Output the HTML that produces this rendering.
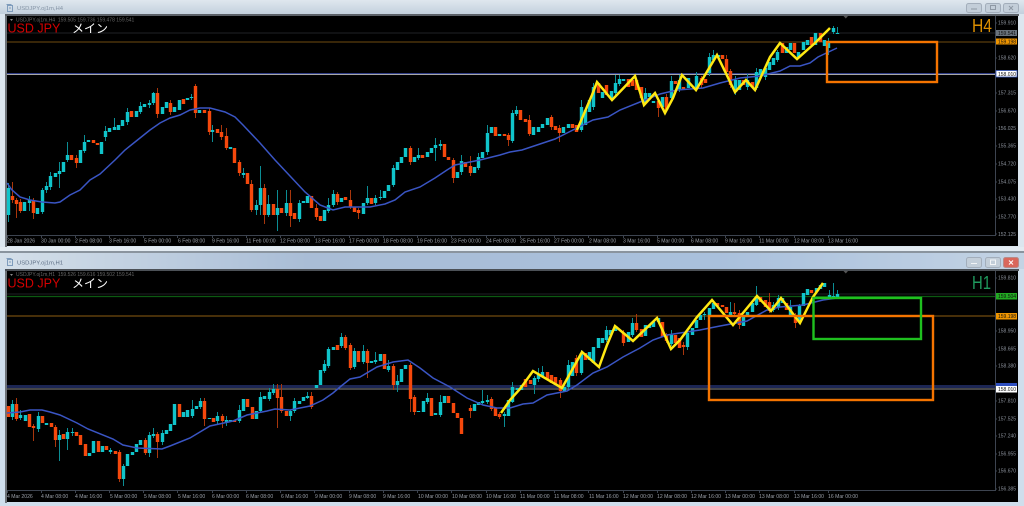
<!DOCTYPE html>
<html><head><meta charset="utf-8"><title>USDJPY</title>
<style>
html,body{margin:0;padding:0;background:#dce6ef;width:1024px;height:506px;overflow:hidden}
svg{display:block;filter:blur(.3px)}
text{font-family:"Liberation Sans","Noto Sans CJK JP",sans-serif}
.t{font-size:5.1px;fill:#9a9fa8}
.p{font-size:5px;fill:#8a909a}
.k{font-size:5px;fill:#111}
.tu{fill:none;stroke:#10c4ca;stroke-width:3.4}
.tw{fill:none;stroke:#0b8d94;stroke-width:1}
.ou{fill:none;stroke:#f5480c;stroke-width:3.4}
.ow{fill:none;stroke:#a8360c;stroke-width:1}
.ma{fill:none;stroke:#3a55c4;stroke-width:1.5}
.ye{fill:none;stroke:#ffe812;stroke-width:2.5;stroke-linejoin:miter}
.ax{stroke:#3d4450;stroke-width:1;fill:none}
</style></head><body>
<svg width="1024" height="506" viewBox="0 0 1024 506" xmlns="http://www.w3.org/2000/svg">
<defs>
<linearGradient id="a" x1="0" y1="0" x2="0" y2="1"><stop offset="0" stop-color="#dfe7ee"/><stop offset="1" stop-color="#c3d0dd"/></linearGradient>
<linearGradient id="b" x1="0" y1="0" x2="1" y2="0"><stop offset="0" stop-color="#d4dfe9"/><stop offset=".3" stop-color="#a9bdd6"/><stop offset=".7" stop-color="#a9c0dc"/><stop offset="1" stop-color="#c3d3e4"/></linearGradient>
</defs>
<rect width="1024" height="506" fill="#dce6ef"/>
<rect x="0" y="0" width="1024" height="14" fill="url(#a)"/>
<rect x="5" y="14" width="1014" height="2" fill="#5b6067"/>
<rect x="5" y="16" width="2" height="231" fill="#6d7278"/>
<rect x="7" y="16" width="1011" height="230" fill="#000"/>
<rect x="0" y="247" width="1024" height="4" fill="#e3ebf2"/>
<rect x="0" y="251" width="1024" height="2" fill="#8a949e"/>
<rect x="0" y="253" width="1024" height="16" fill="url(#b)"/>
<rect x="0" y="269" width="1024" height="237" fill="#cfdeec"/>
<rect x="5" y="269" width="1014" height="2" fill="#4c5157"/>
<rect x="5" y="271" width="2" height="232" fill="#6d7278"/>
<rect x="7" y="271" width="1011" height="231" fill="#000"/>

<!-- window icons -->
<g fill="none" stroke="#7f9cbc" stroke-width="1"><rect x="7.5" y="5.5" width="5" height="6"/><path d="M6.5 4.5h5M9 8h2"/><rect x="7.5" y="259.5" width="5" height="6"/><path d="M6.5 258.5h5M9 262h2"/></g>
<text x="17" y="10" font-size="5.9" fill="#8695a6">USDJPY.oj1m,H4</text>
<text x="17" y="264.5" font-size="5.9" fill="#5e6f86">USDJPY.oj1m,H1</text>

<!-- window buttons -->
<g fill="#c3ced9" stroke="#a3aebb" stroke-width="1">
<rect x="966.5" y="3.5" width="15" height="9" rx="2"/><rect x="985.5" y="3.5" width="15" height="9" rx="2"/><rect x="1003.5" y="3.5" width="15" height="9" rx="2"/>
<rect x="966.5" y="257.5" width="15" height="10" rx="2"/><rect x="985.5" y="257.5" width="15" height="10" rx="2"/>
<rect x="1003.5" y="257.5" width="15" height="10" rx="2" fill="#d9675c" stroke="#b88a88"/>
</g>
<g fill="none" stroke="#8e98a4" stroke-width="1">
<path d="M971 9h6"/><rect x="990.5" y="5.5" width="5" height="4"/><path d="M1009 6l4 4M1013 6l-4 4"/>
<path d="M971 263.5h6" stroke="#f2f4f6"/><rect x="990.5" y="260" width="5" height="4.5" stroke="#f2f4f6"/><path d="M1009 260.5l4 4M1013 260.5l-4 4" stroke="#fff"/>
</g>

<!-- top chart lines -->
<path d="M7 33H995" stroke="#202226" stroke-width="1"/>
<path d="M7 42H995" stroke="#5a3c0c" stroke-width="1.3"/>
<path d="M7 73.5H995" stroke="#2e3c86" stroke-width="1"/>
<path d="M7 74.5H995" stroke="#a8a8a8" stroke-width="1"/>
<!-- top candles -->
<path class="tw" d="M8.5 183V222M29.5 196V211M42.5 188V214M46.5 182V193M50.5 172V190M59.5 162V188M67.5 142V162M84.5 135V153M105.5 126V141M114.5 118V130M127.5 108V125M140.5 102V114M149.5 100V108M153.5 92V105M191.5 94V100M212.5 125V142M243.5 168V178M256.5 200V215M260.5 166V215M268.5 195V217M277.5 190V231M286.5 190V216M299.5 200V222M328.5 198V213M333.5 190V207M367.5 186V205M375.5 195V205M380.5 190V200M393.5 165V187M418.5 148V160M435.5 138V161M440.5 140V150M461.5 155V175M478.5 153V170M487.5 125V155M512.5 110V143M516.5 106V116M581.5 100V132M593.5 83V110M615.5 75V95M619.5 75V86M645.5 88V105M671.5 76V100M679.5 75V92M696.5 72V90M709.5 53V76M713.5 50V62M735.5 76V95M747.5 74V90M756.5 68V90M765.5 65V80M777.5 50V62M828.5 38V55M833.5 26V34M837.5 27V34"/>
<path class="ow" d="M12.5 182V203M16.5 198V218M20.5 199V213M33.5 198V219M76.5 155V168M157.5 88V118M170.5 100V115M195.5 84V118M209.5 108V135M221.5 125V140M226.5 128V150M239.5 160V176M251.5 180V212M264.5 184V224M290.5 190V227M316.5 204V220M337.5 192V205M350.5 190V209M358.5 208V219M410.5 146V165M453.5 158V183M470.5 156V176M508.5 133V146M529.5 115V136M551.5 115V130M559.5 125V142M658.5 100V117M666.5 94V112M701.5 76V88M726.5 55V75M730.5 69V88"/>
<path class="ou" d="M12.5 196V200M16.5 200V204M20.5 202V211M33.5 201V213M71.5 155V160M76.5 158V163M93.5 140V143M97.5 143V145M131.5 111V117M157.5 93V114M170.5 103V112M183.5 99V104M195.5 86V113M204.5 110V113M209.5 111V132M217.5 129V133M221.5 132V137M226.5 136V148M234.5 148V163M239.5 162V173M247.5 173V184M251.5 184V210M264.5 188V215M273.5 204V215M281.5 208V213M290.5 203V216M294.5 213V219M311.5 196V208M316.5 208V217M320.5 216V221M337.5 194V202M345.5 197V200M350.5 200V207M354.5 207V212M358.5 210V213M371.5 198V204M410.5 148V162M422.5 155V158M444.5 144V157M448.5 157V160M453.5 160V178M465.5 162V167M470.5 166V173M495.5 127V136M504.5 134V136M508.5 135V140M520.5 110V120M525.5 119V122M529.5 120V134M551.5 117V127M555.5 126V130M559.5 128V133M572.5 124V128M576.5 125V132M598.5 83V93M606.5 85V95M628.5 79V87M632.5 80V86M636.5 80V90M641.5 87V98M658.5 101V108M666.5 97V110M675.5 81V84M683.5 87V90M701.5 78V85M705.5 79V83M722.5 55V59M726.5 59V72M730.5 71V85M743.5 80V85M752.5 82V87M782.5 43V53M794.5 43V53M811.5 37V45M820.5 33V42"/>
<path class="tu" d="M8.5 188V215M24.5 202V211M29.5 200V203M37.5 208V214M42.5 190V212M46.5 186V190M50.5 176V187M55.5 173V177M59.5 171V174M63.5 162V172M67.5 155V160M80.5 150V163M84.5 142V151M88.5 140V142M101.5 142V154M105.5 131V137M109.5 128V132M114.5 127V130M118.5 125V130M122.5 120V126M127.5 112V122M136.5 111V117M140.5 106V112M144.5 104V107M149.5 103V105M153.5 93V103M162.5 107V114M166.5 102V108M174.5 107V112M179.5 100V110M187.5 98V100M191.5 97V98M199.5 110V113M212.5 130V132M230.5 147V149M243.5 173V175M256.5 205V210M260.5 188V205M268.5 204V215M277.5 208V215M286.5 203V213M299.5 203V219M303.5 201V203M307.5 196V203M324.5 210V221M328.5 205V211M333.5 194V205M341.5 198V202M363.5 203V214M367.5 198V203M375.5 198V203M380.5 197V198M384.5 191V198M388.5 185V191M393.5 168V185M397.5 162V170M401.5 157V163M405.5 148V157M414.5 157V162M418.5 155V158M427.5 152V157M431.5 148V153M435.5 145V148M440.5 144V146M457.5 172V178M461.5 161V172M474.5 167V173M478.5 157V168M482.5 152V158M487.5 133V152M491.5 127V133M499.5 134V136M512.5 113V141M516.5 110V114M533.5 127V135M538.5 127V132M542.5 124V128M547.5 118V125M563.5 127V133M568.5 124V128M581.5 107V130M585.5 110V125M589.5 100V112M593.5 87V107M602.5 92V98M611.5 91V98M615.5 83V93M619.5 79V84M623.5 79V81M645.5 93V103M649.5 93V97M653.5 101V103M662.5 97V107M671.5 81V98M679.5 80V89M688.5 78V88M696.5 76V88M709.5 57V73M713.5 55V60M718.5 55V57M735.5 80V92M739.5 80V90M747.5 80V87M756.5 72V88M760.5 69V75M765.5 68V77M769.5 62V70M773.5 58V65M777.5 52V60M786.5 47V53M790.5 43V50M798.5 52V57M803.5 42V50M807.5 40V45M815.5 33V45M824.5 40V46M828.5 42V48M833.5 28V32M837.5 33V34"/>
<path class="ma" d="M7 183L12 190L20 197L30 200L42 202L55 203L60 202L70 195L80 190L90 180L100 174L115 160L125 150L135 142L150 130L160 123L170 118L180 115L190 110L200 108L210 108L225 112L235 117L243 125L260 143L275 160L290 176L305 192L320 205L333 210L345 207L370 207L385 204L395 200L405 192L420 187L435 178L447 170L455 165L470 162L480 160L500 155L510 152L522 150L540 144L555 139L565 134L583 125L593 120L608 117L620 110L640 102L660 94L677 90L703 88L720 83L740 78L760 76L780 71L790 66L800 66L810 63L818 57L837 48"/>
<path class="ye" d="M577 130L592 95L597 82L612 100L635 76L644 105L655 93L665 113L673 98L682 75L696 90L717 55L735 92L746 80L755 90L770 57L780 43L797 59L815 43L830 28"/>
<rect x="827" y="42" width="110" height="40" fill="none" stroke="#f57400" stroke-width="2.4"/>
<path d="M843.5 16h4.5l-2.2 2.5z" fill="#555"/>

<!-- top axes -->
<path class="ax" d="M995.5 16V236M7 235.5H996"/>
<path class="ax" d="M7.5 236v2M41.5 236v2M75.5 236v2M109.5 236v2M143.5 236v2M177.5 236v2M212.5 236v2M246.5 236v2M280.5 236v2M314.5 236v2M349.5 236v2M383.5 236v2M417.5 236v2M451.5 236v2M486.5 236v2M520.5 236v2M554.5 236v2M588.5 236v2M623.5 236v2M657.5 236v2M691.5 236v2M725.5 236v2M759.5 236v2M794.5 236v2M828.5 236v2M995 23h2M995 58h2M995 93h2M995 111h2M995 128h2M995 146h2M995 164h2M995 182h2M995 199h2M995 217h2M995 234h2"/>
<g class="t">
<text x="7" y="242.5">28 Jan 2026</text><text x="41" y="242.5">30 Jan 00:00</text><text x="75" y="242.5">2 Feb 08:00</text><text x="109" y="242.5">3 Feb 16:00</text><text x="144" y="242.5">5 Feb 00:00</text><text x="178" y="242.5">6 Feb 08:00</text><text x="212" y="242.5">9 Feb 16:00</text><text x="246" y="242.5">11 Feb 00:00</text><text x="280" y="242.5">12 Feb 08:00</text><text x="315" y="242.5">13 Feb 16:00</text><text x="349" y="242.5">17 Feb 00:00</text><text x="383" y="242.5">18 Feb 08:00</text><text x="417" y="242.5">19 Feb 16:00</text><text x="451" y="242.5">23 Feb 00:00</text><text x="486" y="242.5">24 Feb 08:00</text><text x="520" y="242.5">25 Feb 16:00</text><text x="554" y="242.5">27 Feb 00:00</text><text x="589" y="242.5">2 Mar 08:00</text><text x="623" y="242.5">3 Mar 16:00</text><text x="657" y="242.5">5 Mar 00:00</text><text x="691" y="242.5">6 Mar 08:00</text><text x="725" y="242.5">9 Mar 16:00</text><text x="759" y="242.5">11 Mar 00:00</text><text x="794" y="242.5">12 Mar 08:00</text><text x="828" y="242.5">13 Mar 16:00</text>
</g>
<g class="p">
<text x="998" y="24.7">159.910</text><text x="998" y="59.7">158.620</text><text x="998" y="94.7">157.315</text><text x="998" y="112.7">156.670</text><text x="998" y="130">156.025</text><text x="998" y="147.7">155.365</text><text x="998" y="165.7">154.720</text><text x="998" y="183.7">154.075</text><text x="998" y="200.7">153.430</text><text x="998" y="218.7">152.770</text><text x="998" y="236">152.125</text>
</g>
<rect x="996" y="30" width="21" height="6" fill="#69727c"/><text class="k" x="998" y="34.8">159.541</text>
<rect x="996" y="38.5" width="21" height="6" fill="#ef9500"/><text class="k" x="998" y="43.4">159.198</text>
<rect x="996" y="70.5" width="21" height="6.5" fill="#fff" stroke="#3355bb" stroke-width=".8"/><text class="k" x="998" y="75.8">158.010</text>

<!-- top labels -->
<text x="16" y="21.5" font-size="5" fill="#666">USDJPY.oj1m,H4&#160; 159.505 159.736 159.478 159.541</text>
<path d="M10 19h3l-1.5 2z" fill="#888"/>
<text x="7.5" y="32.7" font-size="12.5" fill="#d40000">USD JPY</text>
<text x="72" y="32.5" font-size="12" fill="#fff">メイン</text>
<text x="972" y="32" font-size="18" fill="#dd8f00" textLength="20" lengthAdjust="spacingAndGlyphs">H4</text>

<!-- bottom chart lines -->
<path d="M7 294H995" stroke="#202226" stroke-width="1"/>
<path d="M7 296.5H995" stroke="#0c5a12" stroke-width="1.3"/>
<path d="M7 316H995" stroke="#5f3f0c" stroke-width="1.5"/>
<path d="M7 386.5H995" stroke="#1c2654" stroke-width="3"/>
<path d="M7 389H995" stroke="#8c8c8c" stroke-width="1"/>
<!-- bottom candles -->
<path class="tw" d="M12.5 400V420M20.5 410V420M38.5 412V432M59.5 430V461M67.5 428V450M72.5 428V436M110.5 448V454M123.5 464V486M153.5 428V438M149.5 432V457M162.5 430V445M192.5 400V418M200.5 398V409M217.5 412V424M226.5 416V426M239.5 405V423M260.5 392V413M269.5 388V401M273.5 384V395M290.5 410V421M294.5 398V413M307.5 392V399M324.5 360V373M328.5 347V368M341.5 333V348M354.5 348V369M363.5 345V364M375.5 352V364M388.5 360V372M397.5 375V392M440.5 395V417M427.5 393V404M482.5 390V404M487.5 395V404M504.5 412V427M512.5 382V403M534.5 376V394M538.5 368V382M542.5 366V378M568.5 360V389M581.5 350V375M606.5 326V342M632.5 318V337M671.5 330V346M687.5 330V350M704.5 312V320M730.5 302V316M756.5 286V306M773.5 302V312M778.5 295V310M790.5 300V317M799.5 304V324M829.5 290V299M833.5 283V298M837.5 290V299"/>
<path class="ow" d="M16.5 398V421M33.5 424V441M55.5 425V447M119.5 450V482M145.5 438V455M157.5 432V458M204.5 398V426M222.5 414V428M277.5 384V428M281.5 384V413M311.5 392V409M345.5 335V350M350.5 343V370M367.5 349V378M393.5 364V390M410.5 363V412M414.5 395V415M470.5 405V418M491.5 397V411M499.5 412V419M560.5 378V398M576.5 355V376M623.5 330V346M636.5 314V332M666.5 333V343M683.5 342V355M739.5 310V329M795.5 313V328M734.5 303V316M769.5 293V313"/>
<path class="ou" d="M8.5 406V417M16.5 404V419M29.5 414V427M33.5 426V428M42.5 416V423M51.5 423V427M55.5 427V440M63.5 434V439M76.5 432V436M80.5 435V445M85.5 444V456M98.5 441V452M106.5 446V450M115.5 451V454M119.5 452V479M145.5 440V453M157.5 434V442M179.5 404V417M204.5 401V419M213.5 418V422M222.5 416V421M234.5 420V422M247.5 399V407M252.5 407V419M277.5 389V398M281.5 397V411M286.5 411V416M311.5 396V407M337.5 345V350M345.5 337V348M350.5 345V368M358.5 351V362M367.5 351V363M384.5 354V369M393.5 366V385M410.5 365V399M414.5 397V412M431.5 398V416M448.5 396V403M453.5 403V413M457.5 413V418M461.5 418V434M470.5 408V411M491.5 399V409M495.5 408V416M499.5 414V417M525.5 379V387M530.5 380V384M547.5 372V379M551.5 375V383M555.5 377V385M560.5 380V391M576.5 358V373M585.5 353V360M623.5 333V343M636.5 323V330M641.5 329V337M662.5 322V337M666.5 335V341M675.5 335V343M679.5 338V348M683.5 345V347M717.5 303V306M722.5 305V307M726.5 307V313M734.5 312V314M739.5 313V325M760.5 297V302M765.5 300V307M769.5 302V311M786.5 303V310M795.5 315V323M811.5 290V293"/>
<path class="tu" d="M12.5 404V417M20.5 415V418M25.5 415V421M38.5 416V429M46.5 423V425M59.5 435V440M67.5 432V439M72.5 432V433M89.5 453V456M93.5 441V453M102.5 446V452M110.5 450V452M123.5 466V479M127.5 454V466M132.5 452V455M136.5 444V452M140.5 440V445M149.5 435V453M153.5 434V436M162.5 433V442M166.5 430V434M170.5 424V431M174.5 404V425M183.5 412V417M187.5 410V417M192.5 409V416M196.5 406V409M200.5 401V407M209.5 418V419M217.5 416V421M226.5 420V423M230.5 420V421M239.5 410V421M243.5 399V411M256.5 411V419M260.5 397V411M264.5 396V399M269.5 392V399M273.5 389V393M290.5 411V416M294.5 401V411M299.5 401V404M303.5 397V401M307.5 396V398M316.5 385V388M320.5 370V385M324.5 364V371M328.5 349V366M333.5 347V350M341.5 337V346M354.5 351V367M363.5 351V362M371.5 361V363M375.5 360V362M380.5 354V361M388.5 366V370M397.5 381V385M401.5 369V382M405.5 365V369M418.5 411V412M423.5 401V412M427.5 398V402M435.5 413V415M440.5 402V415M444.5 396V403M474.5 404V411M478.5 402V405M482.5 401V403M487.5 400V402M504.5 414V416M508.5 400V416M512.5 387V402M517.5 388V390M521.5 385V390M534.5 378V385M538.5 375V379M542.5 372V376M564.5 387V391M568.5 365V387M572.5 362V376M581.5 353V373M589.5 352V360M593.5 347V363M598.5 338V348M602.5 338V343M606.5 330V340M610.5 330V335M615.5 326V331M628.5 332V342M632.5 323V335M645.5 325V336M649.5 325V328M653.5 322V327M658.5 318V322M671.5 335V344M687.5 333V347M692.5 328V335M696.5 320V328M700.5 315V320M704.5 314V315M709.5 308V315M713.5 303V309M730.5 312V315M743.5 317V326M747.5 312V317M752.5 303V312M756.5 297V305M773.5 305V310M778.5 298V307M782.5 298V303M790.5 307V315M799.5 306V322M803.5 293V306M807.5 289V295M816.5 288V292M820.5 285V289M824.5 283V287M829.5 295V297M833.5 296V297M837.5 294V297"/>
<path class="ma" d="M7 413L20 412L30 410L42 410L50 412L60 415L77 423L88 429L113 439L123 445L137 448L162 449L170 446L190 438L210 426L233 421L247 415L267 411L275 409L290 410L310 406L323 400L333 393L340 387L350 379L360 377L377 367L393 362L408 360L420 368L433 378L450 387L467 398L483 405L497 408L510 408L523 404L533 403L547 395L567 391L577 385L593 373L607 367L623 357L640 348L653 340L667 335L680 333L700 330L720 326L747 321L767 310L780 307L803 305L823 300L837 298"/>
<path class="ye" d="M501 413L510 400L520 389L533 371L562 388L582 352L599 367L607 345L615 326L633 341L657 318L671 349L680 340L697 317L712 300L733 325L757 296L771 311L781 298L800 323L813 297L823 283"/>
<rect x="709" y="316" width="224" height="84" fill="none" stroke="#f57400" stroke-width="2.4"/>
<rect x="813.5" y="298" width="107.5" height="41" fill="none" stroke="#1fc01f" stroke-width="2.4"/>
<path d="M843.5 271h4.5l-2.2 2.5z" fill="#555"/>

<!-- bottom axes -->
<path class="ax" d="M995.5 271V491M7 490.5H996"/>
<path class="ax" d="M7.5 491v2M41.5 491v2M75.5 491v2M109.5 491v2M143.5 491v2M177.5 491v2M212.5 491v2M246.5 491v2M280.5 491v2M314.5 491v2M349.5 491v2M383.5 491v2M417.5 491v2M451.5 491v2M486.5 491v2M520.5 491v2M554.5 491v2M588.5 491v2M623.5 491v2M657.5 491v2M691.5 491v2M725.5 491v2M759.5 491v2M794.5 491v2M828.5 491v2M995 278h2M995 331h2M995 349h2M995 366h2M995 401h2M995 419h2M995 436h2M995 454h2M995 471h2M995 489h2"/>
<g class="t">
<text x="7" y="498">4 Mar 2026</text><text x="41" y="498">4 Mar 08:00</text><text x="75" y="498">4 Mar 16:00</text><text x="110" y="498">5 Mar 00:00</text><text x="144" y="498">5 Mar 08:00</text><text x="178" y="498">5 Mar 16:00</text><text x="212" y="498">6 Mar 00:00</text><text x="246" y="498">6 Mar 08:00</text><text x="281" y="498">6 Mar 16:00</text><text x="315" y="498">9 Mar 00:00</text><text x="349" y="498">9 Mar 08:00</text><text x="383" y="498">9 Mar 16:00</text><text x="418" y="498">10 Mar 00:00</text><text x="452" y="498">10 Mar 08:00</text><text x="486" y="498">10 Mar 16:00</text><text x="520" y="498">11 Mar 00:00</text><text x="554" y="498">11 Mar 08:00</text><text x="589" y="498">11 Mar 16:00</text><text x="623" y="498">12 Mar 00:00</text><text x="657" y="498">12 Mar 08:00</text><text x="691" y="498">12 Mar 16:00</text><text x="725" y="498">13 Mar 00:00</text><text x="759" y="498">13 Mar 08:00</text><text x="794" y="498">13 Mar 16:00</text><text x="828" y="498">16 Mar 00:00</text>
</g>
<g class="p">
<text x="998" y="279.7">159.810</text><text x="998" y="332.7">158.950</text><text x="998" y="350.7">158.665</text><text x="998" y="367.7">158.380</text><text x="998" y="402.7">157.810</text><text x="998" y="420.7">157.525</text><text x="998" y="437.7">157.240</text><text x="998" y="455.7">156.955</text><text x="998" y="472.7">156.670</text><text x="998" y="490.7">156.385</text>
</g>
<rect x="996" y="293" width="21" height="6.5" fill="#22ab22"/><text class="k" x="998" y="298">159.504</text>
<rect x="996" y="313" width="21" height="6.5" fill="#ef9500"/><text class="k" x="998" y="318">159.198</text>
<rect x="996" y="383" width="21" height="3.5" fill="#2e4fc0"/>
<rect x="996" y="386" width="21" height="6.5" fill="#fff"/><text class="k" x="998" y="391">158.010</text>

<!-- bottom labels -->
<text x="16" y="276" font-size="5" fill="#666">USDJPY.oj1m,H1&#160; 159.526 159.616 159.502 159.541</text>
<path d="M10 274h3l-1.5 2z" fill="#888"/>
<text x="7.5" y="287.7" font-size="12.5" fill="#d40000">USD JPY</text>
<text x="72" y="287.5" font-size="12" fill="#fff">メイン</text>
<text x="972" y="289" font-size="18" fill="#1f9a5e" textLength="19" lengthAdjust="spacingAndGlyphs">H1</text>
</svg>
</body></html>
